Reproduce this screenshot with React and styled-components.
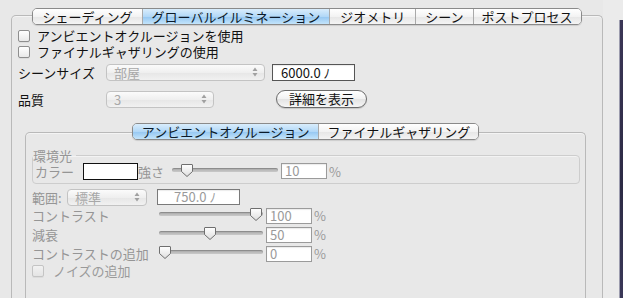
import React from "react"
import styled, { createGlobalStyle, css } from "styled-components"

const GlobalStyle = createGlobalStyle`
  html, body {
    margin: 0;
    padding: 0;
    background: #e8e8e8;
  }
  body {
    font-family: "Noto Sans CJK JP", "Noto Sans", sans-serif;
    font-size: 13px;
    line-height: 15px;
    color: #111;
  }
`

const Window = styled.div`
  width: 623px;
  height: 298px;
  overflow: hidden;
  display: flex;
  background: #e8e8e8;
`

const Main = styled.div`
  width: 592px;
  padding: 8px 0 0 11px;
  display: flex;
  flex-direction: column;
`

const Gutter = styled.div`
  flex: 1;
  display: flex;
  justify-content: flex-end;
  background: #ebebeb;
`

const DesktopEdge = styled.div`
  width: 3px;
  margin-top: 20px;
  background: linear-gradient(#3b3656, #2c2a44 60%, #3a3858);
  border-left: 1px solid #9c9cae;
`

/* ---------- tabs ---------- */

const TabBar = styled.div`
  display: flex;
  align-self: center;
  position: relative;
  z-index: 1;
  height: 15px;
  border: 1px solid #8a8a8a;
  border-radius: 5px;
  overflow: hidden;
  box-shadow: 0 1px 1px rgba(0, 0, 0, 0.12);
  margin-bottom: ${(p) => p.$overlap}px;
`

const Tab = styled.div`
  padding: 0 ${(p) => p.$pad || 9}px;
  line-height: 15px;
  white-space: nowrap;
  color: #111;
  background: linear-gradient(#ffffff, #f3f3f3 50%, #e6e6e6 51%, #f4f4f4);
  & + & {
    border-left: 1px solid #a9a9a9;
  }
  ${(p) =>
    p.$active &&
    css`
      background: linear-gradient(#d9edfc, #b2d8f7 50%, #94c6f1 51%, #c3e4fb);
      color: #0b1a2a;
    `}
`

const Pane = styled.div`
  flex: 1;
  border: 1px solid #b9b9b9;
  border-bottom: none;
  border-radius: 5px 5px 0 0;
  box-shadow: inset 0 1px 0 #f4f4f4;
  display: flex;
  flex-direction: column;
  padding: ${(p) => p.$pad};
`

const InnerSection = styled.div`
  display: flex;
  flex-direction: column;
  flex: 1;
  width: 561px;
  margin: 15px 0 0 7px;
`

/* ---------- form bits ---------- */

const CheckRow = styled.label`
  display: flex;
  align-items: center;
  height: 16px;
  line-height: 14px;
  gap: ${(p) => p.$gap || 7}px;
  color: ${(p) => (p.$disabled ? "#9a9a9a" : "#111")};
  white-space: nowrap;
`

const Box = styled.span`
  width: 10px;
  height: 10px;
  border-radius: 2px;
  border: 1px solid ${(p) => (p.$disabled ? "#c4c4c4" : "#8e8e8e")};
  background: ${(p) =>
    p.$disabled
      ? "linear-gradient(#f2f2f2, #e4e4e4)"
      : "linear-gradient(#ffffff, #e9e9e9)"};
  box-shadow: 0 1px 0 rgba(0, 0, 0, 0.05);
`

const Row = styled.div`
  display: flex;
  align-items: center;
  height: ${(p) => p.$h || 19}px;
  margin-top: ${(p) => p.$mt || 0}px;
  white-space: nowrap;
`

const Label = styled.span`
  width: ${(p) => p.$w}px;
  flex-shrink: 0;
  color: ${(p) => (p.$dim ? "#959595" : "#111")};
`

const Select = styled.div`
  width: ${(p) => p.$w}px;
  height: 15px;
  flex-shrink: 0;
  box-sizing: content-box;
  border: 1px solid #c3c3c3;
  border-radius: 4px;
  background: linear-gradient(#fbfbfb, #efefef 50%, #e6e6e6 51%, #f1f1f1);
  color: #a8a8a8;
  display: flex;
  align-items: center;
  justify-content: space-between;
  padding: 0 6px 0 7px;
  margin-left: ${(p) => p.$ml || 0}px;
`

const Arrows = styled.svg`
  width: 6px;
  height: 10px;
`

const Field = styled.div`
  width: ${(p) => p.$w}px;
  height: ${(p) => p.$h || 15}px;
  box-sizing: border-box;
  flex-shrink: 0;
  border: 1px solid ${(p) => p.$border || "#9b9b9b"};
  background: #fff;
  color: ${(p) => (p.$dim ? "#9a9a9a" : "#111")};
  line-height: ${(p) => (p.$h || 15) - 2}px;
  padding-left: ${(p) => p.$pl || 3}px;
  margin-left: ${(p) => p.$ml || 0}px;
  box-shadow: inset 0 1px 1px rgba(0, 0, 0, 0.08);
`

const Swatch = styled.div`
  width: 55px;
  height: 17px;
  box-sizing: border-box;
  border: 1px solid #111;
  background: #fff;
  flex-shrink: 0;
`

const Percent = styled.span`
  color: #9a9a9a;
  margin-left: 2px;
`

const Button = styled.div`
  width: 91px;
  height: 18px;
  box-sizing: border-box;
  margin-left: ${(p) => p.$ml}px;
  border: 1px solid #6c6c6c;
  border-radius: 9px;
  background: linear-gradient(#ffffff, #f2f2f2 50%, #e3e3e3 51%, #f6f6f6);
  box-shadow: 0 1px 1px rgba(0, 0, 0, 0.15);
  text-align: center;
  line-height: 16px;
  color: #111;
`

/* ---------- slider ---------- */

const SliderWrap = styled.div`
  position: relative;
  width: ${(p) => p.$w}px;
  height: 17px;
  flex-shrink: 0;
  margin-left: ${(p) => p.$ml || 0}px;
`

const Track = styled.div`
  position: absolute;
  left: 0;
  right: 0;
  top: 5px;
  height: 4px;
  border-radius: 3px;
  background: linear-gradient(#a9a9a9, #c9c9c9);
  box-shadow: inset 0 1px 1px rgba(0, 0, 0, 0.2);
`

const Thumb = styled.svg`
  position: absolute;
  top: 0;
  width: 14px;
  height: 15px;
  margin-left: -7px;
`

function Slider({ width, value, ml }) {
  return (
    <SliderWrap $w={width} $ml={ml}>
      <Track />
      <Thumb viewBox="0 0 14 15" style={{ left: `${value}%` }}>
        <defs>
          <linearGradient id="thumbg" x1="0" y1="0" x2="0" y2="1">
            <stop offset="0" stopColor="#ffffff" />
            <stop offset="1" stopColor="#dedede" />
          </linearGradient>
        </defs>
        <path
          d="M2 1.5 H12 Q12.5 1.5 12.5 2 V8.5 L7 13.5 L1.5 8.5 V2 Q1.5 1.5 2 1.5 Z"
          fill="url(#thumbg)"
          stroke="#6f6f6f"
          strokeWidth="1"
        />
      </Thumb>
    </SliderWrap>
  )
}

function PopUp({ width, value, ml }) {
  return (
    <Select $w={width} $ml={ml}>
      <span>{value}</span>
      <Arrows viewBox="0 0 6 10">
        <path d="M3 0.5 L5.5 4 H0.5 Z M3 9.5 L5.5 6 H0.5 Z" fill="#a0a0a0" />
      </Arrows>
    </Select>
  )
}

/* ---------- group box ---------- */

const Group = styled.fieldset`
  margin: 0;
  padding: 0 0 3px 2px;
  border: 1px solid #cdcdcd;
  border-radius: 4px;
  box-shadow: inset 0 1px 0 #f3f3f3;
  min-width: 0;
`

const GroupTitle = styled.legend`
  padding: 0 4px 0 0;
  margin-left: -2px;
  line-height: 13px;
  color: #959595;
`

export default function App() {
  return (
    <Window>
      <GlobalStyle />
      <Main>
        <TabBar $overlap={-10}>
          <Tab $pad={9}>シェーディング</Tab>
          <Tab $pad={9} $active>
            グローバルイルミネーション
          </Tab>
          <Tab $pad={10}>ジオメトリ</Tab>
          <Tab $pad={9}>シーン</Tab>
          <Tab $pad={8}>ポストプロセス</Tab>
        </TabBar>
        <Pane $pad="12px 0 0 6px">
          <CheckRow>
            <Box />
            アンビエントオクルージョンを使用
          </CheckRow>
          <CheckRow>
            <Box />
            ファイナルギャザリングの使用
          </CheckRow>

          <Row $h={18} $mt={3}>
            <Label $w={88}>シーンサイズ</Label>
            <PopUp width={144} value="部屋" />
            <Field $w={83} $h={17} $ml={7} $border="#555" $pl={8}>
              6000.0 ﾉ
            </Field>
          </Row>

          <Row $h={18} $mt={9}>
            <Label $w={88}>品質</Label>
            <PopUp width={93} value="3" />
            <Button $ml={62}>詳細を表示</Button>
          </Row>

          <InnerSection>
            <TabBar $overlap={-8}>
              <Tab $pad={9} $active>
                アンビエントオクルージョン
              </Tab>
              <Tab $pad={8}>ファイナルギャザリング</Tab>
            </TabBar>
            <Pane $pad="16px 5px 0 6px">
              <Group>
                <GroupTitle>環境光</GroupTitle>
                <Row $h={18}>
                  <Label $w={48} $dim>
                    カラー
                  </Label>
                  <Swatch />
                  <Label $w={34} $dim>
                    強さ
                  </Label>
                  <Slider width={106} value={14} />
                  <Field $w={46} $h={16} $ml={3} $dim>
                    10
                  </Field>
                  <Percent>%</Percent>
                </Row>
              </Group>

              <Row $h={18} $mt={4}>
                <Label $w={35} $dim>
                  範囲:
                </Label>
                <PopUp width={65} value="標準" />
                <Field $w={83} $h={16} $ml={10} $pl={16} $border="#7a7a7a" $dim>
                  750.0 ﾉ
                </Field>
              </Row>
              <Row $h={19}>
                <Label $w={127} $dim>
                  コントラスト
                </Label>
                <Slider width={104} value={93} />
                <Field $w={46} $h={16} $ml={3} $dim>
                  100
                </Field>
                <Percent>%</Percent>
              </Row>
              <Row $h={19}>
                <Label $w={127} $dim>
                  減衰
                </Label>
                <Slider width={104} value={49} />
                <Field $w={46} $h={16} $ml={3} $dim>
                  50
                </Field>
                <Percent>%</Percent>
              </Row>
              <Row $h={19}>
                <Label $w={127} $dim>
                  コントラストの追加
                </Label>
                <Slider width={104} value={6} />
                <Field $w={46} $h={16} $ml={3} $dim>
                  0
                </Field>
                <Percent>%</Percent>
              </Row>
              <CheckRow $disabled $gap={9}>
                <Box $disabled />
                ノイズの追加
              </CheckRow>
            </Pane>
          </InnerSection>
        </Pane>
      </Main>
      <Gutter>
        <DesktopEdge />
      </Gutter>
    </Window>
  )
}
